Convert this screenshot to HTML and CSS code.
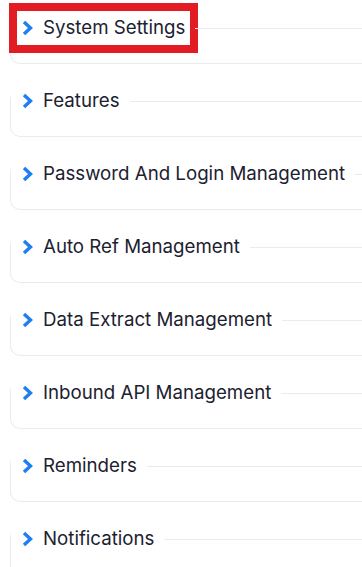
FILE: index.html
```html
<!DOCTYPE html>
<html lang="en">
  <head>
    <meta charset="utf-8">
    <meta name="viewport" content="width=device-width, initial-scale=1">
    <title>Settings</title>
    <link rel="stylesheet" href="styles.css">
  </head>
  <body>
    <div class="page">
      <div class="section">
        <div class="section-head">
          <span class="head-label selected">
            <svg class="chevron" viewBox="0 0 11 16"><polyline points="2,2 8.5,8 2,14"/></svg>
            <span class="title">System Settings</span>
          </span>
          <span class="head-line"></span>
        </div>
      </div>

      <div class="section">
        <div class="section-head">
          <span class="head-label">
            <svg class="chevron" viewBox="0 0 11 16"><polyline points="2,2 8.5,8 2,14"/></svg>
            <span class="title">Features</span>
          </span>
          <span class="head-line"></span>
        </div>
      </div>

      <div class="section">
        <div class="section-head">
          <span class="head-label">
            <svg class="chevron" viewBox="0 0 11 16"><polyline points="2,2 8.5,8 2,14"/></svg>
            <span class="title">Password And Login Management</span>
          </span>
          <span class="head-line"></span>
        </div>
      </div>

      <div class="section">
        <div class="section-head">
          <span class="head-label">
            <svg class="chevron" viewBox="0 0 11 16"><polyline points="2,2 8.5,8 2,14"/></svg>
            <span class="title">Auto Ref Management</span>
          </span>
          <span class="head-line"></span>
        </div>
      </div>

      <div class="section">
        <div class="section-head">
          <span class="head-label">
            <svg class="chevron" viewBox="0 0 11 16"><polyline points="2,2 8.5,8 2,14"/></svg>
            <span class="title">Data Extract Management</span>
          </span>
          <span class="head-line"></span>
        </div>
      </div>

      <div class="section">
        <div class="section-head">
          <span class="head-label">
            <svg class="chevron" viewBox="0 0 11 16"><polyline points="2,2 8.5,8 2,14"/></svg>
            <span class="title">Inbound API Management</span>
          </span>
          <span class="head-line"></span>
        </div>
      </div>

      <div class="section">
        <div class="section-head">
          <span class="head-label">
            <svg class="chevron" viewBox="0 0 11 16"><polyline points="2,2 8.5,8 2,14"/></svg>
            <span class="title">Reminders</span>
          </span>
          <span class="head-line"></span>
        </div>
      </div>

      <div class="section">
        <div class="section-head">
          <span class="head-label">
            <svg class="chevron" viewBox="0 0 11 16"><polyline points="2,2 8.5,8 2,14"/></svg>
            <span class="title">Notifications</span>
          </span>
          <span class="head-line"></span>
        </div>
      </div>
    </div>
  </body>
</html>
```

FILE: styles.css
```css
html, body {
  margin: 0;
  background: #ffffff;
  overflow: hidden;
}
body {
  font-family: Inter, "Noto Sans", sans-serif;
  color: #1c2130;
}
.page {
  padding-top: 28px;
}
.section {
  margin: 0 -30px 37px 10px;
  border: 1px solid #e8ebef;
  border-top: none;
  border-radius: 10px;
  padding-bottom: 23px;
}
.section-head {
  display: flex;
  align-items: center;
  height: 24px;
  margin-top: -12px;
  padding-left: 11px;
  background: #ffffff;
}
.head-label {
  display: inline-flex;
  align-items: center;
  gap: 10px;
}
.head-label.selected {
  outline: 8px solid #e31c23;
  outline-offset: 5px;
}
.chevron {
  width: 11px;
  height: 16px;
  fill: none;
  stroke: #1f7ef0;
  stroke-width: 3.4;
}
.title {
  font-size: 18.7px;
  line-height: 24px;
  white-space: nowrap;
}
.head-line {
  flex: 1;
  margin-left: 10px;
  border-top: 1px solid #e8ebef;
}
```
